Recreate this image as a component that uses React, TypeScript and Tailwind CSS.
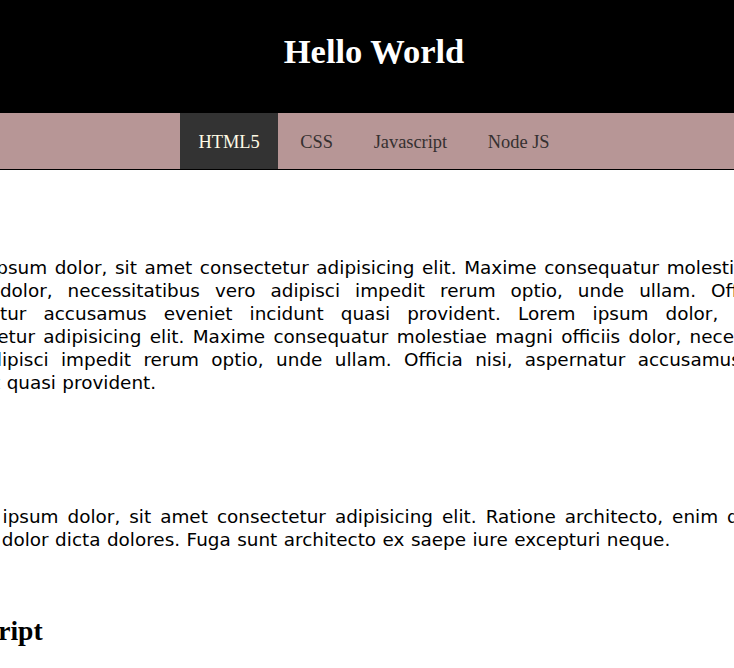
import React from "react";

const para1 = [
  "Lorem ipsum dolor, sit amet consectetur adipisicing elit. Maxime consequatur molestiae magni",
  "officiis dolor, necessitatibus vero adipisci impedit rerum optio, unde ullam. Officia nisi,",
  "aspernatur accusamus eveniet incidunt quasi provident. Lorem ipsum dolor, sit amet",
  "consectetur adipisicing elit. Maxime consequatur molestiae magni officiis dolor, necessitatibus",
  "vero adipisci impedit rerum optio, unde ullam. Officia nisi, aspernatur accusamus eveniet",
  "incidunt quasi provident.",
];

const para2 = [
  "Lorem ipsum dolor, sit amet consectetur adipisicing elit. Ratione architecto, enim doloribus",
  "autem dolor dicta dolores. Fuga sunt architecto ex saepe iure excepturi neque.",
];

function Line({ text, last }: { text: string; last: boolean }) {
  return (
    <span
      className={
        last
          ? "block text-left whitespace-nowrap"
          : "block text-justify [text-align-last:justify] whitespace-nowrap"
      }
    >
      {text}
    </span>
  );
}

const navItems = ["HTML5", "CSS", "Javascript", "Node JS"];

export default function App() {
  return (
    <div className="h-screen w-full overflow-hidden bg-white">
      <div className="ml-[-80px] w-[908px]">
        <header className="h-[113px] bg-black pt-[34px]">
          <h1 className="text-center font-['Liberation_Serif',serif] text-[34.5px] font-bold leading-none text-white">
            Hello World
          </h1>
        </header>
        <nav className="border-b border-black bg-[#b79696]">
          <ul className="flex h-[56px] justify-center gap-[4.6px] font-['Liberation_Serif',serif] text-[18.4px]">
            {navItems.map((n, i) => (
              <li
                key={n}
                className={
                  i === 0
                    ? "flex items-center bg-[#333333] px-[18px] pt-[4px] text-[#fffbe6]"
                    : "flex items-center px-[18px] pt-[4px] text-[#353030]"
                }
              >
                {n}
              </li>
            ))}
          </ul>
        </nav>
        <main className="pt-[86px] font-['DejaVu_Sans',sans-serif] text-[18.4px] leading-[23px] text-black [word-spacing:0.6px]">
          <section>
            <p className="px-[6px]">
              {para1.map((l, i) => (
                <Line key={i} text={l} last={i === para1.length - 1} />
              ))}
            </p>
          </section>
          <section className="pt-[63px]">
            <h2 className="mb-[16px] font-['Liberation_Serif',serif] text-[27.6px] font-bold leading-[32px] [word-spacing:0px]">
              CSS
            </h2>
            <p className="px-[16px]">
              {para2.map((l, i) => (
                <Line key={i} text={l} last={i === para2.length - 1} />
              ))}
            </p>
          </section>
          <section className="pt-[64px]">
            <h2 className="mb-[16px] font-['Liberation_Serif',serif] text-[27.6px] font-bold leading-[32px] [word-spacing:0px]">
              Javascript
            </h2>
          </section>
        </main>
      </div>
    </div>
  );
}
